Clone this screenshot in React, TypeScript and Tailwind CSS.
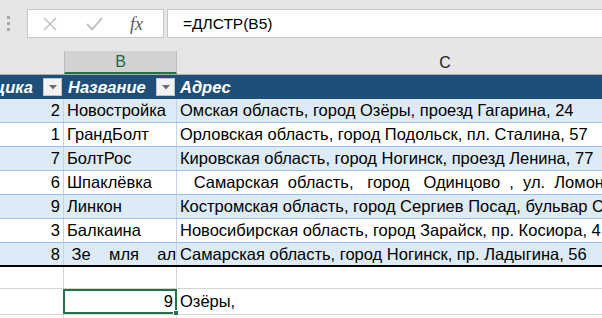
import React from "react";

const rows = [
  { a: "2", b: "Новостройка", c: "Омская область, город Озёры, проезд Гагарина, 24" },
  { a: "1", b: "ГрандБолт", c: "Орловская область, город Подольск, пл. Сталина, 57" },
  { a: "7", b: "БолтРос", c: "Кировская область, город Ногинск, проезд Ленина, 77" },
  { a: "6", b: "Шпаклёвка", c: "   Самарская  область,   город   Одинцово  ,  ул.  Ломоносова" },
  { a: "9", b: "Линкон", c: "Костромская область, город Сергиев Посад, бульвар Строителей" },
  { a: "3", b: "Балкаина", c: "Новосибирская область, город Зарайск, пр. Косиора, 41" },
  { a: "8", b: " Зе    мля    ал", c: "Самарская область, город Ногинск, пр. Ладыгина, 56" },
];

const font = { fontFamily: '"Liberation Sans", Arial, sans-serif' };

function DropBtn() {
  return (
    <div className="w-[19px] h-[18px] shrink-0 border border-[#c4c4c4] bg-[#f3f3f3] flex items-center justify-center">
      <svg width="8" height="5" viewBox="0 0 8 5">
        <path d="M0 0 L8 0 L4 4.5 Z" fill="#6b6b6b" />
      </svg>
    </div>
  );
}

export default function App() {
  return (
    <div
      className="w-[602px] h-[318px] overflow-hidden bg-[#e6e6e6] text-[16.5px] text-black flex flex-col"
      style={font}
    >
      {/* formula bar */}
      <div className="h-[38px] shrink-0 pt-[9px] flex">
        <div className="w-[27px] flex flex-col items-center gap-[3px] pt-[7px] pr-[11px]">
          <div className="w-[3px] h-[3px] bg-[#a8a8a8]" />
          <div className="w-[3px] h-[3px] bg-[#a8a8a8]" />
          <div className="w-[3px] h-[3px] bg-[#a8a8a8]" />
        </div>
        <div className="w-[137px] h-[29px] bg-white border border-[#c6c6c6] flex items-center">
          <svg className="ml-[15px]" width="14" height="14" viewBox="0 0 14 14">
            <path d="M1 1 L13 13 M13 1 L1 13" stroke="#c3c3c3" strokeWidth="1.6" />
          </svg>
          <svg className="ml-[29px]" width="17" height="14" viewBox="0 0 17 14">
            <path d="M1 7 L6 12.5 L16 1" stroke="#c3c3c3" strokeWidth="2" fill="none" />
          </svg>
          <span
            className="ml-[27px] text-[#5a5a5a] text-[18px] italic leading-none"
            style={{ fontFamily: '"Liberation Serif", serif' }}
          >
            fx
          </span>
        </div>
        <div className="flex-1 ml-[3px] h-[29px] bg-white border-y border-l border-[#c6c6c6] flex items-center pl-[15px] text-[15.5px]">
          =ДЛСТР(B5)
        </div>
      </div>

      {/* column headers */}
      <div className="h-[13px] shrink-0" />
      <div className="flex h-[24px] shrink-0 border-b border-[#ababab]">
        <div className="w-[64px] shrink-0" />
        <div className="w-[113px] shrink-0 bg-[#d2d2d2] border-x border-[#bcbcbc] border-b-2 border-b-[#217346] flex items-center justify-center text-[#1e6b41] text-[16px]">
          B
        </div>
        <div className="w-[536px] shrink-0 flex items-center justify-center text-[#222] text-[16px]">C</div>
      </div>

      {/* sheet */}
      <div className="bg-white flex-1">
        {/* table header */}
        <div className="flex h-[24px] bg-[#1f4e78] text-white font-bold italic items-center">
          <div className="w-[64px] shrink-0 flex items-center">
            <div className="w-[33px] overflow-hidden flex justify-end">
              <span className="whitespace-nowrap">Поставщика</span>
            </div>
            <div className="ml-[10px]">
              <DropBtn />
            </div>
          </div>
          <div className="w-[113px] shrink-0 flex items-center justify-between pl-[4px] pr-[2px]">
            <span>Название</span>
            <DropBtn />
          </div>
          <div className="w-[536px] shrink-0 pl-[3px]">Адрес</div>
        </div>

        {/* data rows */}
        {rows.map((r, i) => (
          <div
            key={i}
            className={`flex h-[24px] ${i % 2 === 0 ? "bg-[#ddebf7]" : "bg-white"} ${
              i === rows.length - 1 ? "border-b-2 border-black" : "border-b border-[#9bc2e6]"
            }`}
          >
            <div className="w-[64px] shrink-0 border-r border-[#c5d3e2] flex items-center justify-end pr-[3px]">
              {r.a}
            </div>
            <div className="w-[113px] shrink-0 border-r border-[#c5d3e2] flex items-center pl-[3px] whitespace-pre overflow-hidden">
              {r.b}
            </div>
            <div className="w-[536px] shrink-0 flex items-center pl-[3px] whitespace-pre overflow-hidden">
              {r.c}
            </div>
          </div>
        ))}

        {/* empty row */}
        <div className="flex h-[22px] border-b border-[#d4d4d4]">
          <div className="w-[64px] shrink-0 border-r border-[#d4d4d4]" />
          <div className="w-[113px] shrink-0 border-r border-[#d4d4d4]" />
          <div className="flex-1" />
        </div>

        {/* result row */}
        <div className="flex h-[26px] border-b border-[#d4d4d4]">
          <div className="w-[63px] shrink-0" />
          <div className="relative w-[114px] shrink-0 border-2 border-[#217346] flex items-center justify-end pr-[2px]">
            9
            <div className="absolute right-[-4px] bottom-[-4px] w-[6px] h-[6px] bg-[#217346] border border-white" />
          </div>
          <div className="flex-1 flex items-center pl-[3px]">Озёры,</div>
        </div>
        <div className="flex h-[10px]">
          <div className="w-[64px] shrink-0 border-r border-[#d4d4d4]" />
          <div className="w-[113px] shrink-0 border-r border-[#d4d4d4]" />
        </div>
      </div>
    </div>
  );
}
